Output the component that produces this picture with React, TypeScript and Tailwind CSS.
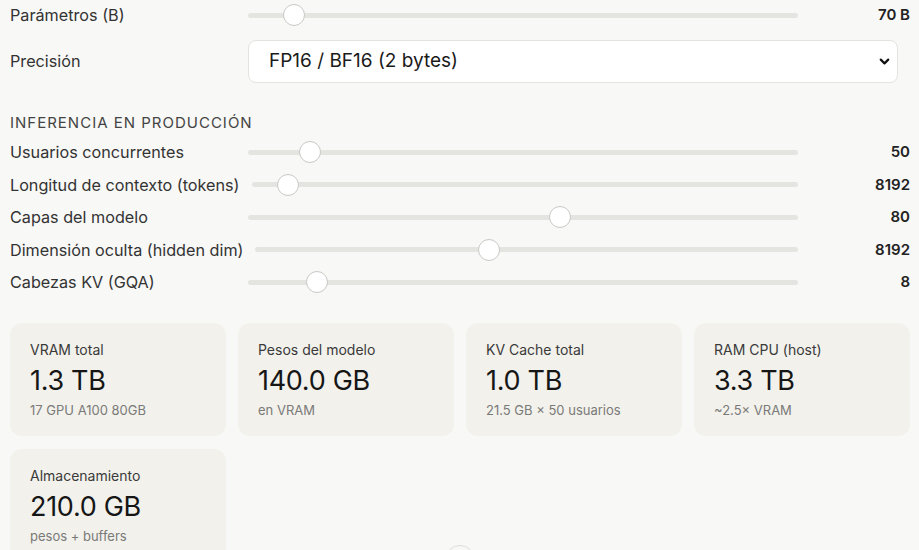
import { ChevronDown } from "lucide-react";

type SliderRow = { label: string; value: string; pos: number };

const rows: SliderRow[] = [
  { label: "Usuarios concurrentes", value: "50", pos: 11.3 },
  { label: "Longitud de contexto (tokens)", value: "8192", pos: 6.6 },
  { label: "Capas del modelo", value: "80", pos: 56.7 },
  { label: "Dimensión oculta (hidden dim)", value: "8192", pos: 43 },
  { label: "Cabezas KV (GQA)", value: "8", pos: 12.5 },
];

const cards = [
  { label: "VRAM total", value: "1.3 TB", sub: "17 GPU A100 80GB" },
  { label: "Pesos del modelo", value: "140.0 GB", sub: "en VRAM" },
  { label: "KV Cache total", value: "1.0 TB", sub: "21.5 GB × 50 usuarios" },
  { label: "RAM CPU (host)", value: "3.3 TB", sub: "~2.5× VRAM" },
  { label: "Almacenamiento", value: "210.0 GB", sub: "pesos + buffers" },
];

function Slider({ pos }: { pos: number }) {
  return (
    <div className="relative flex-1 h-[22px] flex items-center">
      <div className="w-full h-[5px] rounded-full bg-[#e4e4e1]" />
      <div
        className="absolute top-0 w-[22px] h-[22px] rounded-full bg-white border border-[#c9c9c6] -translate-x-1/2"
        style={{ left: `${pos}%` }}
      />
    </div>
  );
}

function Row({ label, value, pos, h }: SliderRow & { h: string }) {
  return (
    <div className={`flex items-center gap-3 ${h}`}>
      <div className="min-w-[226px] text-[16.2px] text-[#333] whitespace-nowrap">{label}</div>
      <Slider pos={pos} />
      <div className="w-[100px] text-right text-[15px] font-semibold text-[#222]">{value}</div>
    </div>
  );
}

export default function App() {
  return (
    <div
      className="relative min-h-[550px] h-[550px] overflow-hidden bg-[#f8f8f6] pl-[10px] pr-[9px]"
      style={{ fontFamily: "Inter, 'Noto Sans', sans-serif" }}
    >
      <Row label="Parámetros (B)" value="70 B" pos={8.4} h="h-[30px]" />

      <div className="mt-[10px] flex items-center gap-3">
        <div className="min-w-[226px] text-[16.2px] text-[#333]">Precisión</div>
        <div className="flex-1 h-[43px] mr-[12px] rounded-lg border border-[#e3e3e0] bg-white flex items-center justify-between pl-5 pr-[5px]">
          <span className="text-[19px] text-[#1a1a1a]">FP16 / BF16 (2 bytes)</span>
          <ChevronDown size={15} strokeWidth={3.5} className="text-[#111]" />
        </div>
      </div>

      <div className="mt-[30px] text-[15px] tracking-[1px] text-[#444] leading-5">
        INFERENCIA EN PRODUCCIÓN
      </div>

      <div className="mt-[3px] flex flex-col">
        {rows.map((r) => (
          <Row key={r.label} {...r} h="h-[32.5px]" />
        ))}
      </div>

      <div className="mt-[24px] grid grid-cols-4 gap-x-3 gap-y-[13px]">
        {cards.map((c) => (
          <div key={c.label} className="h-[113px] rounded-xl bg-[#f2f1ec] px-5 pt-[17px]">
            <div className="text-[14px] text-[#3a3a3a] leading-5">{c.label}</div>
            <div className="text-[27px] tracking-[-0.3px] text-[#161616] leading-[34px] mt-[4px]">{c.value}</div>
            <div className="text-[13px] text-[#7a7a78] leading-5 mt-[2px]">{c.sub}</div>
          </div>
        ))}
      </div>

      <div className="absolute left-[445px] top-[545px] w-[30px] h-[30px] rounded-full bg-[#f8f8f6] border border-[#dcdcda]" />
    </div>
  );
}
